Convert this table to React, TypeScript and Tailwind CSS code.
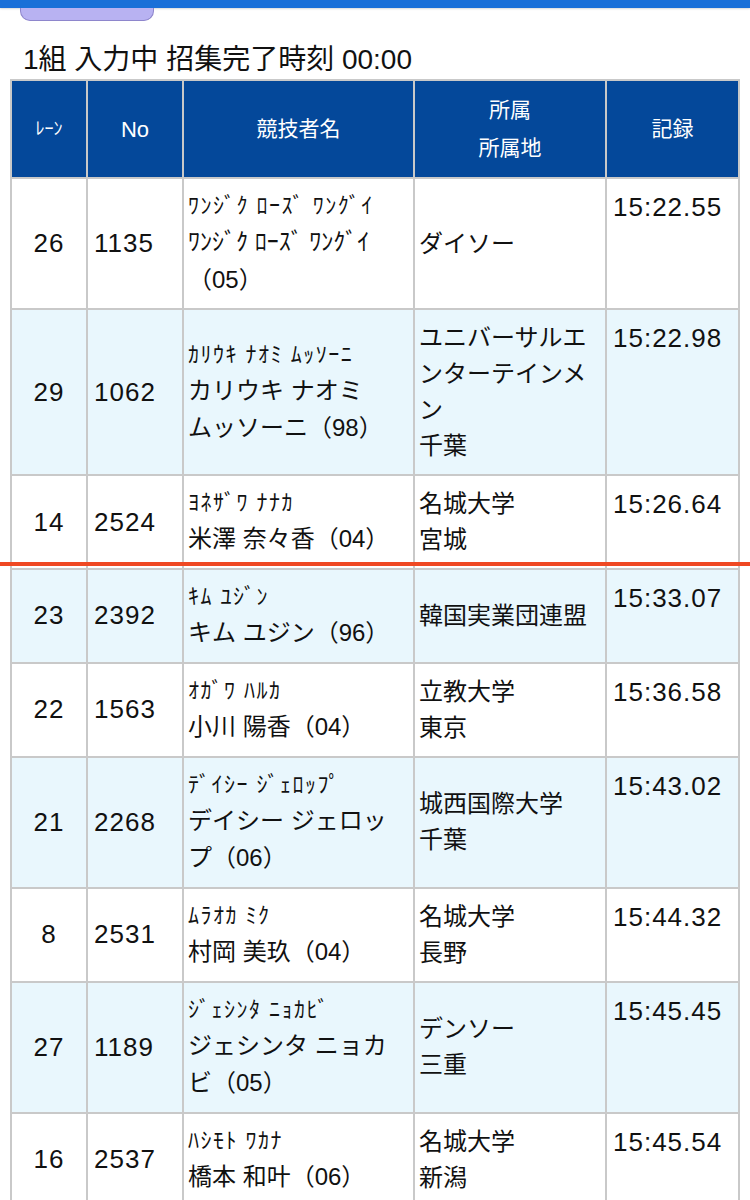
import React from 'react';

type Entry = {
    lane: string;
    no: string;
    kana: string;
    name: string[];
    team: string[];
    time: string;
};

const entries: Entry[] = [
    { lane: '26', no: '1135', kana: 'ﾜﾝｼﾞｸ ﾛｰｽﾞ ﾜﾝｸﾞｲ', name: ['ﾜﾝｼﾞｸ ﾛｰｽﾞ ﾜﾝｸﾞｲ', '（05）'], team: ['ダイソー'], time: '15:22.55' },
    { lane: '29', no: '1062', kana: 'ｶﾘｳｷ ﾅｵﾐ ﾑｯｿｰﾆ', name: ['カリウキ ナオミ', 'ムッソーニ（98）'], team: ['ユニバーサルエ', 'ンターテインメ', 'ン', '千葉'], time: '15:22.98' },
    { lane: '14', no: '2524', kana: 'ﾖﾈｻﾞﾜ ﾅﾅｶ', name: ['米澤 奈々香（04）'], team: ['名城大学', '宮城'], time: '15:26.64' },
    { lane: '23', no: '2392', kana: 'ｷﾑ ﾕｼﾞﾝ', name: ['キム ユジン（96）'], team: ['韓国実業団連盟'], time: '15:33.07' },
    { lane: '22', no: '1563', kana: 'ｵｶﾞﾜ ﾊﾙｶ', name: ['小川 陽香（04）'], team: ['立教大学', '東京'], time: '15:36.58' },
    { lane: '21', no: '2268', kana: 'ﾃﾞｲｼｰ ｼﾞｪﾛｯﾌﾟ', name: ['デイシー ジェロッ', 'プ（06）'], team: ['城西国際大学', '千葉'], time: '15:43.02' },
    { lane: '8', no: '2531', kana: 'ﾑﾗｵｶ ﾐｸ', name: ['村岡 美玖（04）'], team: ['名城大学', '長野'], time: '15:44.32' },
    { lane: '27', no: '1189', kana: 'ｼﾞｪｼﾝﾀ ﾆｮｶﾋﾞ', name: ['ジェシンタ ニョカ', 'ビ（05）'], team: ['デンソー', '三重'], time: '15:45.45' },
    { lane: '16', no: '2537', kana: 'ﾊｼﾓﾄ ﾜｶﾅ', name: ['橋本 和叶（06）'], team: ['名城大学', '新潟'], time: '15:45.54' },
];

const cols = 'grid grid-cols-[74px_94px_229px_190px_131px] gap-x-[2px]';

function Row({ e, shaded, cut }: { e: Entry; shaded: boolean; cut?: boolean }) {
    const bg = shaded ? 'bg-[#e9f7fd]' : 'bg-white';
    return (
        <div className={`${cols} relative`}>
            <div className={`${bg} flex items-center justify-center text-[26px] tracking-[1px]`}>{e.lane}</div>
            <div className={`${bg} flex items-center pl-[6px] text-[26px] tracking-[1px]`}>{e.no}</div>
            <div className={`${bg} flex flex-col justify-center py-[10px] pl-[4px] whitespace-nowrap`}>
                <div className="text-[22px] leading-[34px] tracking-[1.5px]">{e.kana}</div>
                {e.name.map((line) => (
                    <div key={line} className="text-[24px] leading-[37.5px]">{line}</div>
                ))}
            </div>
            <div className={`${bg} flex flex-col justify-center py-[10px] pl-[4px] whitespace-nowrap`}>
                {e.team.map((line, i) => (
                    <div key={i} className="text-[24px] leading-[36px]">{line}</div>
                ))}
            </div>
            <div className={`${bg} py-[10px] pl-[6px] text-[26px] leading-[36px] tracking-[1px]`}>{e.time}</div>
            {/* cut line drawn over the row's lower edge */}
            {cut && <div className="absolute -left-[12px] -right-[12px] bottom-[2px] h-[4px] bg-[#ef4822]" />}
        </div>
    );
}

export default function App() {
    return (
        <div className="w-[750px] min-h-screen overflow-hidden bg-white text-[#111] font-['Liberation_Sans','Noto_Sans_CJK_JP',sans-serif]">
            {/* top bar */}
            <div className="h-[8px] bg-[#1a70d8] shadow-[0_1px_2px_rgba(0,0,0,0.15)]" />
            <div className="ml-[20px] w-[134px] h-[13px] bg-[#b8b2f2] border border-t-0 border-[#8e86cc] rounded-b-[10px]" />

            {/* title */}
            <div className="pl-[23px] pt-[21px] pb-[1px] text-[28px] leading-[36px] whitespace-nowrap">
                1組 入力中 招集完了時刻 00:00
            </div>

            {/* table */}
            <div className="mx-[10px] bg-[#c9c9c9] p-[2px] flex flex-col gap-[2px]">
                <div className={`${cols} h-[96px] text-white`}>
                    <div className="bg-[#04489a] flex items-center justify-center text-[18px]">ﾚｰﾝ</div>
                    <div className="bg-[#04489a] flex items-center justify-center text-[22px]">No</div>
                    <div className="bg-[#04489a] flex items-center justify-center text-[21px]">競技者名</div>
                    <div className="bg-[#04489a] flex flex-col items-center justify-center text-[21px] leading-[38px]">
                        <div>所属</div>
                        <div>所属地</div>
                    </div>
                    <div className="bg-[#04489a] flex items-center justify-center text-[21px]">記録</div>
                </div>

                {entries.map((e, i) => (
                    <Row key={e.no} e={e} shaded={i === 1 || (i > 2 && i % 2 === 1)} cut={i === 2} />
                ))}
            </div>
        </div>
    );
}
